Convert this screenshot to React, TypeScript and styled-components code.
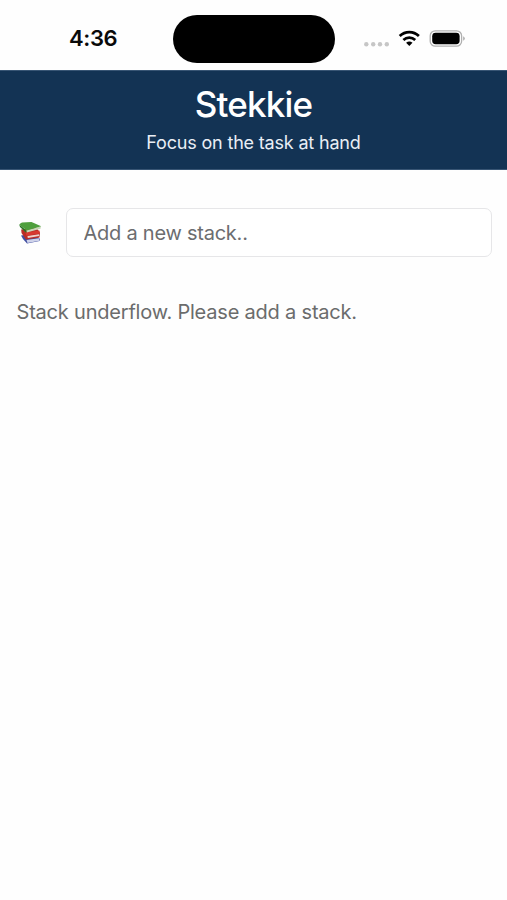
import React from "react";
import styled, { createGlobalStyle } from "styled-components";

const GlobalStyle = createGlobalStyle`
  * { box-sizing: border-box; }
  html, body { margin: 0; background: #fefefe; }
  body { font-family: Inter, "Liberation Sans", sans-serif; }
`;

const Screen = styled.div`
  width: 100%;
  min-height: 900px;
  background: #fefefe;
`;

const StatusBar = styled.div`
  display: grid;
  grid-template-columns: 173px 162px 1fr;
  height: 70px;
  padding-top: 15px;
`;

const Clock = styled.time`
  padding-left: 69px;
  font-size: 22px;
  font-weight: 600;
  line-height: 47px;
  letter-spacing: -0.35px;
  color: #0a0a0a;
`;

const Island = styled.div`
  height: 48px;
  border-radius: 24px;
  background: #000;
`;

const Indicators = styled.div`
  display: flex;
  align-items: flex-start;
  padding: 14px 0 0 28px;
`;

const Header = styled.header`
  height: 99.5px;
  padding-top: 11px;
  background: #133354;
  border-top: 1px solid #385574;
  border-bottom: 1px solid #385574;
  text-align: center;
  color: #fff;
`;

const Title = styled.h1`
  margin: 0;
  font-size: 35px;
  font-weight: 500;
  line-height: 44px;
  letter-spacing: -0.85px;
`;

const Tagline = styled.p`
  margin: 0;
  padding-top: 4px;
  font-size: 18px;
  line-height: 26px;
  letter-spacing: -0.18px;
  color: #e9eef5;
`;

const Main = styled.main`
  padding: 38.5px 15.5px 0 16.5px;
`;

const AddRow = styled.form`
  display: flex;
  align-items: center;
`;

const BooksIcon = styled.svg`
  flex: none;
  margin: 0 23px 2px 1.5px;
`;

const StackInput = styled.input`
  flex: 1;
  min-width: 0;
  height: 49px;
  padding: 0 16.5px;
  border: 1.5px solid #e6e6e8;
  border-radius: 7px;
  outline: none;
  background: #fff;
  font: 400 20px/28px Inter, "Liberation Sans", sans-serif;
  letter-spacing: -0.24px;
  color: #333;
  &::placeholder { color: #6c6d6f; opacity: 1; }
`;

const Message = styled.p`
  margin: 40px 0 0;
  font-size: 20px;
  line-height: 30px;
  letter-spacing: -0.2px;
  color: #6b6c6c;
`;

export default function App() {
  return (
    <Screen>
      <GlobalStyle />
      <StatusBar>
        <Clock>4:36</Clock>
        <Island />
        <Indicators>
          <svg width="104" height="20" viewBox="363 29 104 20">
            <g fill="#c6c6c6">
              <circle cx="366.3" cy="44.2" r="2.2" />
              <circle cx="373.2" cy="44.2" r="2.2" />
              <circle cx="380" cy="44.2" r="2.2" />
              <circle cx="386.8" cy="44.2" r="2.2" />
            </g>
            <g fill="none" stroke="#000" strokeWidth="2.7">
              <path d="M399.7 36A13.8 13.8 0 0 1 418.9 36" />
              <path d="M403.4 40A8.6 8.6 0 0 1 415.2 40" />
            </g>
            <path d="M406.1 42.7Q409.3 40.1 412.5 42.7L409.3 46Z" fill="#000" />
            <rect x="430.2" y="30.8" width="31.4" height="15.4" rx="5" fill="#fff" stroke="#b0b0b0" strokeWidth="1.3" />
            <rect x="432.2" y="32.8" width="27.4" height="11.4" rx="3.4" fill="#000" />
            <path d="M463.2 36.2q1.6 .8 1.6 2.3t-1.6 2.3z" fill="#aaa" />
          </svg>
        </Indicators>
      </StatusBar>
      <Header>
        <Title>Stekkie</Title>
        <Tagline>Focus on the task at hand</Tagline>
      </Header>
      <Main>
        <AddRow>
          <BooksIcon width="25" height="26" viewBox="0 0 25 26">
            <path d="M3 16.5 16 14.5 22 20 21.5 22 9 24.5 5 20Z" fill="#3f4da0" />
            <path d="M8.5 21 21 19.2 21.5 21.8 9.5 24Z" fill="#cfd3ea" />
            <path d="M3.2 10.5 18 8.5 22 13.5 21.5 18.4 8 20.5 3.5 14Z" fill="#b92c26" />
            <path d="M9.5 17 21 15.2 21.2 17 9.8 19Z" fill="#eed0ca" />
            <path d="M7.5 13.5 21.5 11.5 21.6 14.5 8.5 16.7Z" fill="#d8382f" />
            <path d="M1.3 5.5 8.5 11.5 8.3 14 2 8Z" fill="#2b7426" />
            <path d="M8.5 11 22.8 7.5 22.5 9.7 8.8 13.6Z" fill="#c9d6b9" />
            <path d="M1.3 5.8Q2 4.2 4 3.5L13.5 3 23.2 7.3 8.8 11.6Z" fill="#4f9f3d" />
          </BooksIcon>
          <StackInput aria-label="New stack" placeholder="Add a new stack.." />
        </AddRow>
        <Message>Stack underflow. Please add a stack.</Message>
      </Main>
    </Screen>
  );
}
